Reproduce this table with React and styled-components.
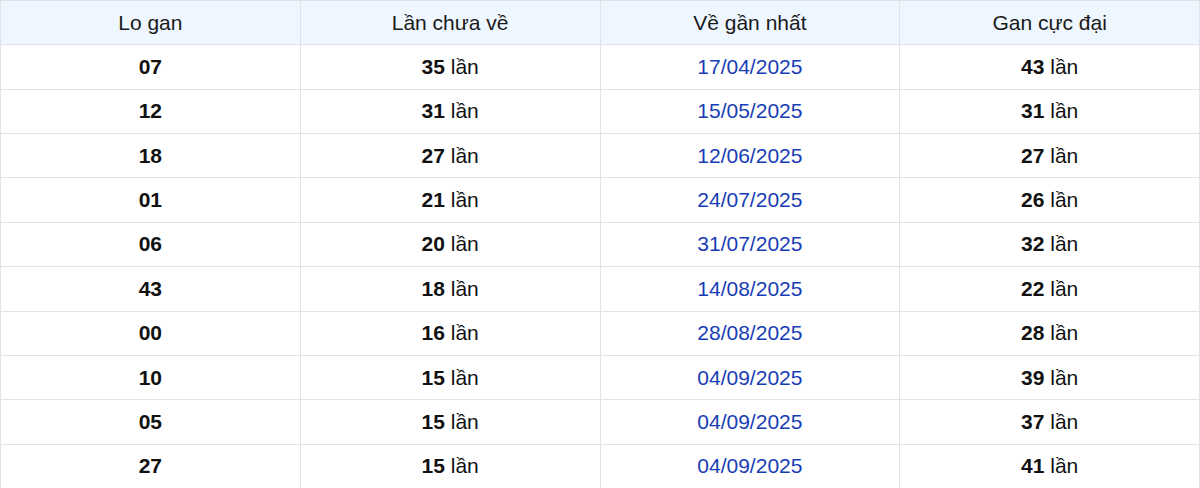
import React from "react";
import styled, { createGlobalStyle } from "styled-components";

const GlobalStyle = createGlobalStyle`
  html, body {
    margin: 0;
    padding: 0;
    background: #ffffff;
  }
`;

const Table = styled.table`
  width: 1200px;
  height: 488px;
  border-collapse: collapse;
  table-layout: fixed;
  font-family: "Liberation Sans", Arial, sans-serif;
  font-size: 21px;
  color: #111111;
`;

const Row = styled.tr`
  height: 44.36px;
`;

const HeadCell = styled.th`
  background-color: #eef6ff;
  border: 1px solid #dfe3e8;
  font-weight: 400;
  color: #1a1a1a;
  text-align: center;
  padding: 0;
`;

const Cell = styled.td`
  border: 1px solid #dfe3e8;
  text-align: center;
  padding: 0;
  color: ${(props) => (props.blue ? "#173db5" : "#111111")};
  font-weight: ${(props) => (props.bold ? 700 : 400)};
`;

const Num = styled.b`
  font-weight: 700;
`;

const rows = [
  ["07", 35, "17/04/2025", 43],
  ["12", 31, "15/05/2025", 31],
  ["18", 27, "12/06/2025", 27],
  ["01", 21, "24/07/2025", 26],
  ["06", 20, "31/07/2025", 32],
  ["43", 18, "14/08/2025", 22],
  ["00", 16, "28/08/2025", 28],
  ["10", 15, "04/09/2025", 39],
  ["05", 15, "04/09/2025", 37],
  ["27", 15, "04/09/2025", 41],
];

export default function App() {
  return (
    <>
      <GlobalStyle />
      <Table>
        <thead>
          <Row>
            <HeadCell>Lo gan</HeadCell>
            <HeadCell>Lần chưa về</HeadCell>
            <HeadCell>Về gần nhất</HeadCell>
            <HeadCell>Gan cực đại</HeadCell>
          </Row>
        </thead>
        <tbody>
          {rows.map(([lo, count, date, max]) => (
            <Row key={lo}>
              <Cell bold>{lo}</Cell>
              <Cell>
                <Num>{count}</Num> lần
              </Cell>
              <Cell blue>{date}</Cell>
              <Cell>
                <Num>{max}</Num> lần
              </Cell>
            </Row>
          ))}
        </tbody>
      </Table>
    </>
  );
}
